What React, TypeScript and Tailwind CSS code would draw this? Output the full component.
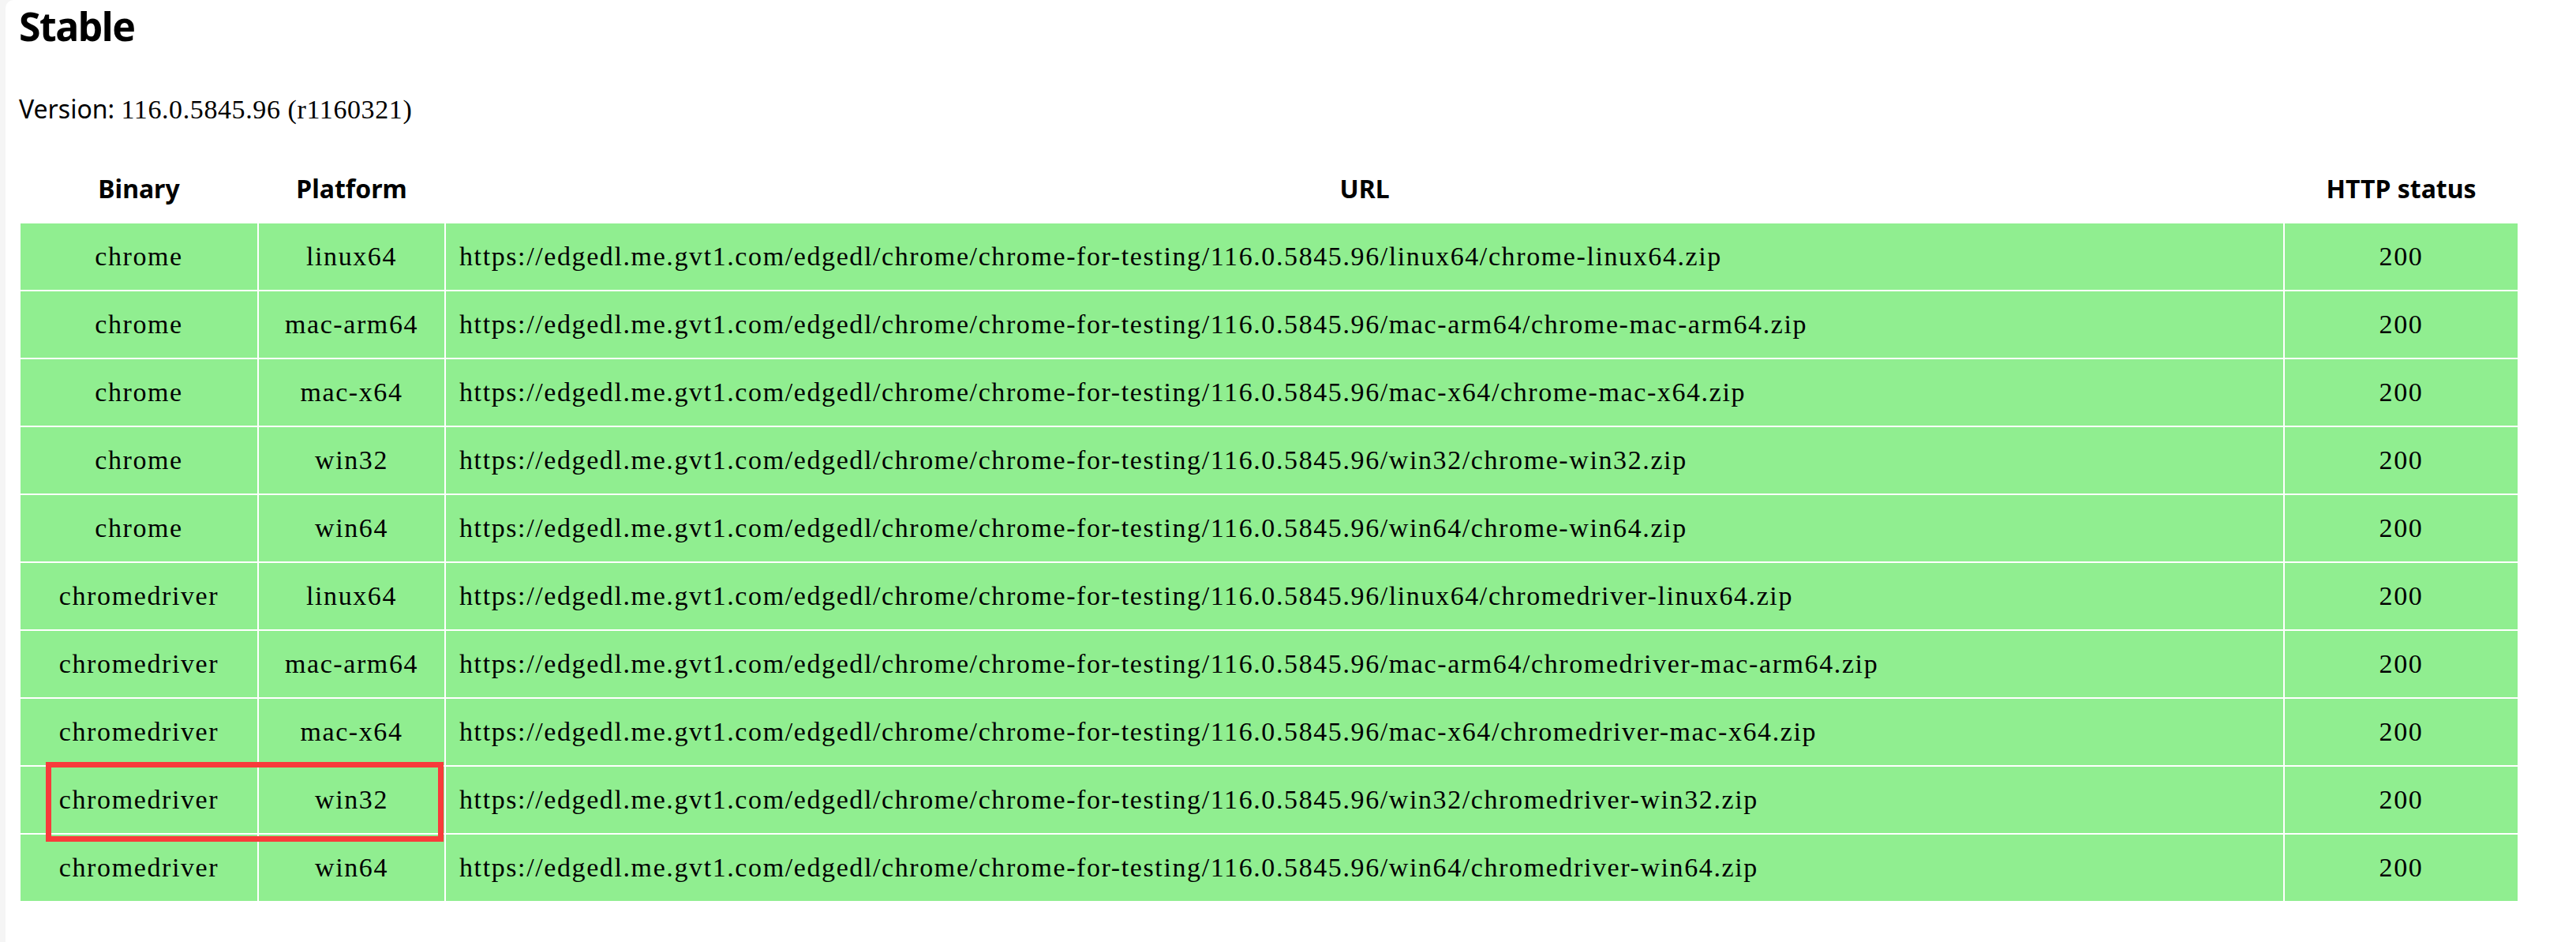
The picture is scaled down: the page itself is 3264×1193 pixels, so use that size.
import React from "react";

type Row = { binary: string; platform: string };

const VERSION = "116.0.5845.96";
const BINARIES = ["chrome", "chromedriver"];
const PLATFORMS = ["linux64", "mac-arm64", "mac-x64", "win32", "win64"];

const rows: Row[] = BINARIES.flatMap((binary) =>
  PLATFORMS.map((platform) => ({ binary, platform }))
);

function url(r: Row) {
  return `https://edgedl.me.gvt1.com/edgedl/chrome/chrome-for-testing/${VERSION}/${r.platform}/${r.binary}-${r.platform}.zip`;
}

// thin serif with a bit of tracking, close to the SimSun glyphs of the original
const serif = "font-['Liberation_Serif',serif] text-[34px] leading-[34px] tracking-[1.6px] whitespace-nowrap";

export default function App() {
  return (
    <div className="flex h-[1193px] bg-[#f5f5f5] pl-[7px] font-['Noto_Sans',sans-serif] text-black">
      <div className="flex-1 rounded-tl-[10px] bg-white pl-[17px] pt-[8px]">
        <h2 className="text-[50px] font-bold leading-[50px] tracking-[-1.5px]">Stable</h2>

        <p className="mt-[64px] h-[32px] text-[32px] leading-[32px]">
          Version:{" "}
          <span className="font-['Liberation_Serif',serif] text-[34px] leading-[32px] tracking-[0.6px]">
            {VERSION} (r1160321)
          </span>
        </p>

        {/* Table */}
        <div className="relative mt-[41px] w-[3168px]">
          <table className="w-[3168px] table-fixed border-separate border-spacing-[2px]">
            <thead>
              <tr className="text-[32px] font-bold leading-[32px]">
                <th className="h-[84px] w-[300px] p-0 text-center">Binary</th>
                <th className="h-[84px] w-[235px] p-0 text-center">Platform</th>
                <th className="h-[84px] w-[2328px] p-0 text-center">URL</th>
                <th className="h-[84px] w-[295px] p-0 text-center">HTTP status</th>
              </tr>
            </thead>
            <tbody className={serif}>
              {rows.map((r) => (
                <tr key={r.binary + r.platform} className="bg-[#90ee90]">
                  <td className="h-[84px] p-0 text-center">{r.binary}</td>
                  <td className="h-[84px] p-0 text-center">{r.platform}</td>
                  <td className="h-[84px] p-0 pl-[17px] text-left">{url(r)}</td>
                  <td className="h-[84px] p-0 text-center">200</td>
                </tr>
              ))}
            </tbody>
          </table>

          {/* highlight box */}
          <div className="pointer-events-none absolute left-[34px] top-[770px] h-[101px] w-[504px] border-[7px] border-[#f83b3b]" />
        </div>
      </div>
    </div>
  );
}
